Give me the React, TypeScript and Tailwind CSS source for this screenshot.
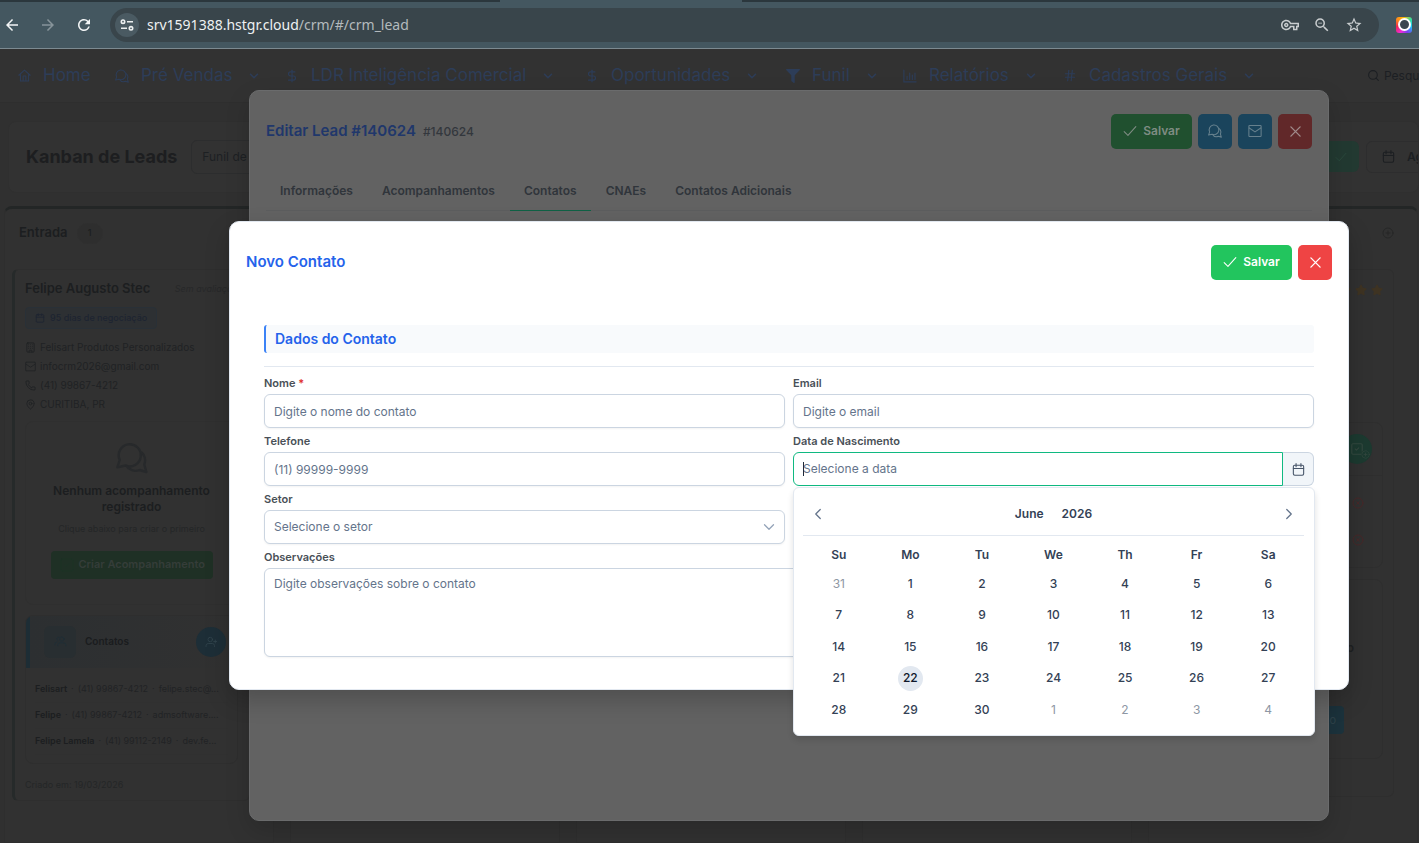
import type { ReactNode } from "react";
import clsx from "clsx";
import { FaFilter, FaStar } from "react-icons/fa";
import { MdArrowBack, MdArrowForward, MdOutlineVpnKey, MdOutlineZoomOut, MdRefresh, MdStarBorder } from "react-icons/md";
import {
  Building,
  Calendar,
  ChevronDown,
  ChevronLeft,
  ChevronRight,
  CircleX,
  DollarSign,
  Hash,
  MapPin,
  Phone,
  CirclePlus,
  Search,
  SquareCheck,
} from "lucide-react";

interface IconProps {
  className?: string;
}

function HomeIcon({ className }: IconProps) {
  return (
    <svg viewBox="0 0 24 24" fill="none" stroke="currentColor" strokeWidth="2" className={className} aria-hidden="true">
      <path d="M1.500 11.500 12 2l10.500 9.500M4.500 9.500V22h15V9.500M9.500 21.500V13h5v8.500" strokeLinejoin="round" strokeLinecap="round" />
    </svg>
  );
}

function CommentsIcon({ className }: IconProps) {
  return (
    <svg viewBox="0 0 24 24" fill="none" stroke="currentColor" strokeWidth="1.800" strokeLinejoin="round" className={className} aria-hidden="true">
      <path d="M1 19 2.800 13.500A8.300 8.300 0 1 1 7 17.600z" />
      <path d="M18.800 7.500a8 8 0 0 1 2.400 9.500l1.600 5.500-5.100-1.500A8.200 8.200 0 0 1 7.500 17.500" />
    </svg>
  );
}

function EnvelopeIcon({ className }: IconProps) {
  return (
    <svg viewBox="0 0 24 24" fill="none" stroke="currentColor" strokeWidth="1.800" strokeLinejoin="round" className={className} aria-hidden="true">
      <rect x="1.500" y="2.500" width="21" height="19" rx="1.500" />
      <path d="m1.500 6.500 10.500 7 10.500-7" />
    </svg>
  );
}

function ChartIcon({ className }: IconProps) {
  return (
    <svg viewBox="0 0 24 24" fill="none" stroke="currentColor" strokeWidth="2" strokeLinecap="round" className={className} aria-hidden="true">
      <path d="M1.500 2v20h21M7 12.500V18M11.500 7v11M16 10.500V18M20.500 7v11" />
    </svg>
  );
}

function CheckIcon({ className }: IconProps) {
  return (
    <svg viewBox="0 0 24 24" fill="none" stroke="currentColor" strokeWidth="1.800" strokeLinecap="round" strokeLinejoin="round" className={className} aria-hidden="true">
      <path d="m2 13 6.500 6.500L22 4.500" />
    </svg>
  );
}

function TimesIcon({ className }: IconProps) {
  return (
    <svg viewBox="0 0 24 24" fill="none" stroke="currentColor" strokeWidth="2.500" strokeLinecap="round" className={className} aria-hidden="true">
      <path d="m3.500 3.500 17 17M20.500 3.500l-17 17" />
    </svg>
  );
}

function CalendarIcon({ className }: IconProps) {
  return (
    <svg viewBox="0 0 24 24" fill="none" stroke="currentColor" strokeWidth="2" strokeLinecap="round" className={className} aria-hidden="true">
      <rect x="2.500" y="4" width="19" height="18.500" rx="2.500" />
      <path d="M2.500 10h19M7.500 1v6M16.500 1v6" />
    </svg>
  );
}

function UsersIcon({ className }: IconProps) {
  return (
    <svg viewBox="0 0 24 24" fill="none" stroke="currentColor" strokeWidth="1.500" strokeLinecap="round" className={className} aria-hidden="true">
      <circle cx="14.500" cy="7.500" r="4" />
      <path d="M7 20v-1.500a4 4 0 0 1 4-4h7a4 4 0 0 1 4 4V20M9 3.800a3.500 3.500 0 0 0-2 6.500M1.500 18v-1a4 4 0 0 1 3.500-4" />
    </svg>
  );
}

function UserPlusIcon({ className }: IconProps) {
  return (
    <svg viewBox="0 0 24 24" fill="none" stroke="currentColor" strokeWidth="1.700" strokeLinecap="round" className={className} aria-hidden="true">
      <circle cx="10.500" cy="7" r="4.500" />
      <path d="M2 21v-1.500a4.500 4.500 0 0 1 4.500-4.500h8a4.500 4.500 0 0 1 4.500 4.500V21M20.500 8v6M17.500 11h6" />
    </svg>
  );
}

function BrowserBar() {
  return (
    <header className="relative z-30">
      <div className="flex h-[2px] bg-[#2b373d]">
        <div className="ml-[500px] h-full w-[242px] bg-[#445760]" />
      </div>
      <div className="flex h-[47px] items-center border-b border-[#7c8a91] bg-[#445760] pb-px">
        <button type="button" aria-label="Voltar" className="ml-[3px] text-[#f3f5f6]">
          <MdArrowBack size={18} />
        </button>
        <button type="button" aria-label="Avançar" className="ml-[18px] text-[#87949a]">
          <MdArrowForward size={18} />
        </button>
        <button type="button" aria-label="Recarregar" className="ml-[18px] text-[#f3f5f6]">
          <MdRefresh size={18} />
        </button>
        <div className="ml-[17px] mr-[17px] flex h-[34px] flex-1 items-center rounded-full bg-[#39454b] pl-[5px] pr-4">
          <button type="button" aria-label="Informações do site" className="flex h-6 w-6 items-center justify-center rounded-full bg-[#4a5a62] text-[#eceff0]">
            <svg viewBox="0 0 14 12" fill="none" stroke="currentColor" strokeWidth="1.600" className="h-3 w-[14px]" aria-hidden="true">
              <circle cx="3" cy="2.700" r="1.700" />
              <path d="M7 2.700h6M1 9.300h6" />
              <circle cx="11" cy="9.300" r="1.700" />
            </svg>
          </button>
          <span className="ml-2 flex-1 font-['Noto_Sans',sans-serif] text-[14px] text-[#b4babd]">
            <span className="text-[#eef1f2]">srv1591388.hstgr.cloud</span>/crm/#/crm_lead
          </span>
          <div className="flex items-center gap-[14px] text-[#c9cdcf]">
            <MdOutlineVpnKey size={18} />
            <MdOutlineZoomOut size={18} />
            <MdStarBorder size={18} />
          </div>
        </div>
        <div className="mr-[7px] flex h-4 w-4 items-center justify-center rounded-[3px] bg-[conic-gradient(#fbbc05,#34e0a1,#18c5f5,#7a3cf0,#f02ad8,#f0264f,#ff8a1e,#fbbc05)]">
          <span className="h-[13px] w-[13px] rounded-full border-2 border-white bg-[#3a4650]" />
        </div>
      </div>
    </header>
  );
}

const navItems = [
  { label: "Home", icon: <HomeIcon className="h-[13px] w-[13px]" />, width: "w-[98px]", menu: false },
  { label: "Pré Vendas", icon: <CommentsIcon className="h-[14px] w-[14px]" />, width: "w-[170px]", menu: true },
  { label: "LDR Inteligência Comercial", icon: <DollarSign size={14} />, width: "w-[300px]", menu: true },
  { label: "Oportunidades", icon: <DollarSign size={14} />, width: "w-[201px]", menu: true },
  { label: "Funil", icon: <FaFilter size={14} />, width: "w-[117px]", menu: true },
  { label: "Relatórios", icon: <ChartIcon className="h-[14px] w-[14px]" />, width: "w-[160px]", menu: true },
  { label: "Cadastros Gerais", icon: <Hash size={15} />, width: "w-[304px]", menu: true },
];

function MainNav() {
  return (
    <nav className="flex h-[54px] items-center overflow-hidden border-b border-[#2e2e2e] bg-[#323232] pl-[17px] text-[#2d3d58]">
      {navItems.map((item) => (
        <a key={item.label} href="#/crm_lead" className={clsx("flex shrink-0 items-center whitespace-nowrap text-[17px]", item.width)}>
          <span className="flex w-[14px] shrink-0 justify-center">{item.icon}</span>
          <span className="ml-3">{item.label}</span>
          {item.menu && <ChevronDown size={14} strokeWidth={2.5} className="ml-[15px]" />}
        </a>
      ))}
      <button type="button" className="flex shrink-0 items-center gap-1 text-[12px] text-[#1c1f23]">
        <Search size={13} strokeWidth={2} />
        Pesquisar
      </button>
    </nav>
  );
}

function KanbanToolbar() {
  return (
    <div className="ml-2 mt-[18px] flex h-[72px] items-center overflow-hidden rounded-lg border border-[#2f2f2f] bg-[#323232] pb-px pl-[17px]">
      <h1 className="shrink-0 text-[18px] font-bold text-[#1d1e20]">Kanban de Leads</h1>
      <button type="button" className="ml-[14px] h-[34px] w-[180px] shrink-0 rounded-md border border-[#2c2d2e] px-[10px] text-left text-[12px] text-[#1d2023]">
        Funil de Vendas
      </button>
      <div className="min-w-0 flex-1" />
      <button type="button" aria-label="Aplicar" className="flex h-[31px] w-[50px] shrink-0 items-center justify-end rounded-md bg-[#223931] pr-3 text-[#2b4a3d]">
        <CheckIcon className="h-3 w-3" />
      </button>
      <button type="button" className="-mr-8 ml-[7px] flex h-8 w-[84px] shrink-0 items-center gap-3 rounded-md border border-[#2d2d2e] pl-[15px] text-[12px] font-semibold text-[#1c1f22]">
        <CalendarIcon className="h-[13px] w-[13px] shrink-0" />
        Agenda
      </button>
    </div>
  );
}

function Column({ children }: { children?: ReactNode }) {
  return (
    <section className="w-[270px] shrink-0 rounded-t-lg border border-t-[3px] border-[#2e2e2e] border-t-[#232626] bg-[#313131] pl-[7px] pr-[23px]">
      {children}
    </section>
  );
}

const infoRows = [
  { icon: <Building size={11} />, text: "Felisart Produtos Personalizados" },
  { icon: <EnvelopeIcon className="h-[11px] w-[11px]" />, text: "infocrm2026@gmail.com" },
  { icon: <Phone size={11} />, text: "(41) 99867-4212" },
  { icon: <MapPin size={11} />, text: "CURITIBA, PR" },
];

const cardContacts = [
  { name: "Felisart", phone: "(41) 99867-4212", email: "felipe.stec@..." },
  { name: "Felipe", phone: "(41) 99867-4212", email: "admsoftware...." },
  { name: "Felipe Lamela", phone: "(41) 99112-2149", email: "dev.fe..." },
];

function LeadCard() {
  return (
    <article className="h-[532px] rounded-md border border-l-[3px] border-[#2e2e2e] border-l-[#262a2a] pl-[10px] pr-[11px] pt-[9px]">
      <div className="flex items-center justify-between whitespace-nowrap">
        <h3 className="text-[13px] font-semibold text-[#1c1e20]">Felipe Augusto Stec</h3>
        <span className="text-[9px] italic text-[#272829]">Sem avaliação</span>
      </div>
      <p className="mt-2 inline-flex h-[22px] items-center gap-[5px] whitespace-nowrap rounded border border-[#293037] bg-[#2d3033] px-[9px] text-[9px] font-medium text-[#1d2431]">
        <Calendar size={10} />
        95 dias de negociação
      </p>
      <ul className="mt-[9px] text-[10px] text-[#202224]">
        {infoRows.map((row) => (
          <li key={row.text} className="flex h-[19px] items-center gap-1 whitespace-nowrap">
            {row.icon}
            {row.text}
          </li>
        ))}
      </ul>
      <div className="mt-[7px] flex h-[184px] flex-col items-center rounded-lg border border-[#2f2f2f] pt-[20px] text-center">
        <CommentsIcon className="h-8 w-8 text-[#27292b]" />
        <p className="mt-[9px] text-[12px] font-semibold leading-4 text-[#1c1e20]">
          Nenhum acompanhamento
          <br />
          registrado
        </p>
        <p className="mt-[6px] whitespace-nowrap text-[9px] leading-4 text-[#242627]">Clique abaixo para criar o primeiro</p>
        <button type="button" className="mt-[14px] flex h-7 w-[162px] shrink-0 items-center gap-1 whitespace-nowrap rounded bg-[#1f3025] pl-2 text-[11px] font-semibold text-[#353d39]">
          <SquareCheck size={16} strokeWidth={1.5} className="shrink-0 text-[#1c3325]" />
          Criar Acompanhamento
        </button>
      </div>
      <div className="mt-[10px] h-[149px] overflow-hidden rounded-lg border border-[#2e2e2e]">
        <div className="flex h-[52px] items-center border-l-4 border-[#1d2d35] bg-gradient-to-r from-[#2c2f31] to-[#313131] pl-[14px] pr-[11px]">
          <span className="flex h-8 w-8 items-center justify-center rounded-md bg-[#282e31] text-[#1f2f38]">
            <UsersIcon className="h-[13px] w-[13px]" />
          </span>
          <h4 className="ml-[9px] flex-1 text-[10px] font-semibold text-[#1a1c1e]">Contatos</h4>
          <button type="button" aria-label="Adicionar contato" className="flex h-[30px] w-[30px] items-center justify-center rounded-full bg-[#1d2e37] text-[#32444d]">
            <UserPlusIcon className="h-3 w-3" />
          </button>
        </div>
        <ul className="px-[9px] pt-[9px]">
          {cardContacts.map((contact) => (
            <li key={contact.name} className="flex h-[26px] items-center gap-1 whitespace-nowrap border-b border-[#303030] text-[9px] text-[#212325]">
              <strong className="font-semibold text-[#1c1e20]">{contact.name}</strong>
              <span>·</span>
              <span>{contact.phone}</span>
              <span>·</span>
              <span>{contact.email}</span>
            </li>
          ))}
        </ul>
      </div>
      <p className="mt-[14px] text-[9px] text-[#242627]">Criado em: 19/03/2026</p>
    </article>
  );
}

// Last column, mostly covered by the dialogs
function RatedCard() {
  return (
    <article className="flex h-[528px] flex-col rounded-md border border-l-[3px] border-[#2e2e2e] pl-[10px] pr-[10px] pt-[14px]">
      <div className="flex justify-end gap-1 text-[#3e3322]">
        <FaStar size={12} />
        <FaStar size={12} />
        <FaStar size={12} />
      </div>
      <div className="mt-[126px] h-[146px] rounded-lg border border-[#2e2e2e]">
        <div className="flex h-[53px] items-center justify-end border-b border-[#2e2e2e] pr-[10px]">
          <span className="relative flex h-[30px] w-[30px] items-center justify-center rounded-full bg-[#1c3a30] text-[#33483f]">
            <SquareCheck size={14} />
            <CirclePlus size={9} className="absolute bottom-[5px] right-[2px] rounded-full bg-[#1c3a30]" />
          </span>
        </div>
        <div className="flex flex-col items-end gap-[25px] pr-[18px] pt-[21px] text-[#482829]">
          <CircleX size={12} />
          <CircleX size={12} />
        </div>
      </div>
      <div className="mt-[11px] h-[180px] rounded-lg border border-[#2e2e2e]">
        <p className="mt-[60px] pr-7 text-right text-[12px] font-semibold leading-4 text-[#1f2123]">o</p>
        <div className="mt-[50px] flex justify-end pr-[38px]">
          <span className="flex h-7 w-[120px] items-center justify-end rounded bg-[#1c333d] pr-2 text-[11px] text-[#30434b]">o</span>
        </div>
      </div>
    </article>
  );
}

function Board() {
  return (
    <div className="mt-[13px] flex flex-1 gap-4 overflow-hidden pl-1">
      <Column>
        <div className="flex h-[60px] items-center gap-[9px] pb-3 pl-[7px]">
          <h2 className="text-[13px] font-semibold text-[#1c1e20]">Entrada</h2>
          <span className="flex h-[21px] w-[26px] items-center justify-center rounded-full border border-[#2f2f2f] bg-[#2e2e2e] text-[9px] font-medium text-[#1c1e20]">1</span>
        </div>
        <LeadCard />
      </Column>
      <Column />
      <Column />
      <Column />
      <Column>
        <div className="flex h-[60px] items-center justify-end pb-3 text-[#262727]">
          <CirclePlus size={12} />
        </div>
        <RatedCard />
      </Column>
    </div>
  );
}

const leadTabs = ["Informações", "Acompanhamentos", "Contatos", "CNAEs", "Contatos Adicionais"];

function LeadDialog() {
  return (
    <div role="dialog" aria-label="Editar Lead" className="absolute bottom-[22px] left-[249px] right-[90px] top-[90px] rounded-[10px] border border-[#6a6b6c] bg-[#626262] px-4 shadow-[0_10px_24px_rgba(0,0,0,0.15)]">
      <div className="flex h-[81px] items-center gap-[6px]">
        <h2 className="text-[15px] font-semibold text-[#20376b]">Editar Lead #140624</h2>
        <span className="flex-1 pl-px text-[12px] font-medium text-[#33373d]">#140624</span>
        <button type="button" className="flex h-[35px] w-[81px] items-center justify-center gap-[6px] rounded-[5px] bg-[#20502f] pb-px text-[12px] font-semibold text-[#7f8c83]">
          <CheckIcon className="h-[14px] w-[14px]" />
          Salvar
        </button>
        <button type="button" aria-label="Comentários" className="flex h-[35px] w-[34px] items-center justify-center rounded-[5px] bg-[#1a445c] pb-px text-[#66808d]">
          <CommentsIcon className="h-[14px] w-[14px]" />
        </button>
        <button type="button" aria-label="Enviar email" className="flex h-[35px] w-[34px] items-center justify-center rounded-[5px] bg-[#1a445c] pb-px text-[#66808d]">
          <EnvelopeIcon className="h-[14px] w-[14px]" />
        </button>
        <button type="button" aria-label="Fechar lead" className="flex h-[35px] w-[34px] items-center justify-center rounded-[5px] bg-[#612829] pb-px text-[#a08b8b]">
          <TimesIcon className="h-[13px] w-[13px]" />
        </button>
      </div>
      <div role="tablist" className="flex h-[39px] gap-px border-b border-[#5c5d5e]">
        {leadTabs.map((tab) => (
          <button
            key={tab}
            type="button"
            role="tab"
            aria-selected={tab === "Contatos"}
            className={clsx(
              "-mb-px border-b px-[14px] text-[12px] font-semibold text-[#30353b]",
              tab === "Contatos" ? "border-[#0f6145]" : "border-transparent",
            )}
          >
            {tab}
          </button>
        ))}
      </div>
    </div>
  );
}

const weekDays = ["Su", "Mo", "Tu", "We", "Th", "Fr", "Sa"];

const weeks = [
  [31, 1, 2, 3, 4, 5, 6],
  [7, 8, 9, 10, 11, 12, 13],
  [14, 15, 16, 17, 18, 19, 20],
  [21, 22, 23, 24, 25, 26, 27],
  [28, 29, 30, 1, 2, 3, 4],
];

function DatePanel() {
  return (
    <div className="absolute left-0 right-[-1px] top-full z-10 mt-px rounded-md border border-[#e2e8f0] bg-white pb-[10px] pl-[9px] pr-[10px] text-[#334155] shadow-[0_4px_6px_rgba(0,0,0,0.12)]">
      <div className="flex h-[48px] items-center justify-between border-b border-[#e2e8f0] px-[6px] pt-1">
        <button type="button" aria-label="Mês anterior" className="text-[#64748b]">
          <ChevronLeft size={18} strokeWidth={1.7} />
        </button>
        <div className="flex gap-[18px] text-[12px] font-semibold">
          <button type="button">June</button>
          <button type="button">2026</button>
        </div>
        <button type="button" aria-label="Próximo mês" className="text-[#64748b]">
          <ChevronRight size={18} strokeWidth={1.7} />
        </button>
      </div>
      <table className="mt-[6px] w-full table-fixed text-center">
        <thead>
          <tr className="h-[25px]">
            {weekDays.map((day) => (
              <th key={day} scope="col" className="p-0 text-[12px] font-semibold">
                {day}
              </th>
            ))}
          </tr>
        </thead>
        <tbody>
          {weeks.map((week, row) => (
            <tr key={week[0]} className={row % 2 === 0 ? "h-8" : "h-[31px]"}>
              {week.map((day) => {
                const otherMonth = (row === 0 && day > 20) || (row === 4 && day < 10);
                const today = day === 22;
                return (
                  <td key={day} className="p-0">
                    <button
                      type="button"
                      className={clsx(
                        "h-[25px] w-[25px] rounded-full text-[12px]",
                        otherMonth ? "text-[#8e97a4]" : "font-medium",
                        today && "bg-[#e2e8f0] text-[#0f172a]",
                      )}
                    >
                      {day}
                    </button>
                  </td>
                );
              })}
            </tr>
          ))}
        </tbody>
      </table>
    </div>
  );
}

interface FieldProps {
  id: string;
  label: string;
  required?: boolean;
  className?: string;
  children: ReactNode;
}

function Field({ id, label, required, className, children }: FieldProps) {
  return (
    <div className={className}>
      <label htmlFor={id} className="block h-[23px] pt-1 text-[11px] font-semibold leading-4 text-[#495057]">
        {label}
        {required && <span className="text-[#e03131]"> *</span>}
      </label>
      {children}
    </div>
  );
}

const inputClass =
  "block w-full rounded-md border border-[#cbd5e1] bg-white px-[9px] text-[12px] text-[#334155] placeholder:text-[#64748b] outline-none shadow-[0_1px_2px_rgba(18,18,23,0.05)]";

function ContactDialog() {
  return (
    <form aria-label="Novo Contato" className="absolute left-[229px] right-[70px] top-[221px] z-20 rounded-[10px] border border-[#e2e8f0] bg-white px-4 pb-8 shadow-[0_10px_24px_rgba(0,0,0,0.2)]">
      <div className="flex h-[81px] items-center gap-[6px]">
        <h2 className="flex-1 text-[15px] font-semibold text-[#2563eb]">Novo Contato</h2>
        <button type="submit" className="flex h-[35px] w-[81px] items-center justify-center gap-[6px] rounded-[5px] bg-[#22c55e] pb-px text-[12px] font-semibold text-white">
          <CheckIcon className="h-[14px] w-[14px]" />
          Salvar
        </button>
        <button type="button" aria-label="Fechar" className="flex h-[35px] w-[34px] items-center justify-center rounded-[5px] bg-[#ef4444] pb-px text-white">
          <TimesIcon className="h-[13px] w-[13px]" />
        </button>
      </div>
      <div className="px-[18px] pt-[22px]">
        <h3 className="h-7 rounded-[3px] border-l-2 border-[#3b82f6] bg-[#f8fafc] pl-[9px] text-[14px] font-semibold leading-[27px] text-[#2563eb]">
          Dados do Contato
        </h3>
        <hr className="mt-[13px] border-[#e2e8f0]" />
        <div className="mt-1 grid grid-cols-2 gap-x-2 gap-y-px">
          <Field id="nome" label="Nome" required>
            <input id="nome" type="text" placeholder="Digite o nome do contato" className={clsx(inputClass, "h-[34px]")} />
          </Field>
          <Field id="email" label="Email">
            <input id="email" type="email" placeholder="Digite o email" className={clsx(inputClass, "h-[34px]")} />
          </Field>
          <Field id="telefone" label="Telefone">
            <input id="telefone" type="tel" placeholder="(11) 99999-9999" className={clsx(inputClass, "h-[34px]")} />
          </Field>
          <Field id="nascimento" label="Data de Nascimento">
            <div className="relative flex h-[34px]">
              <input id="nascimento" type="text" placeholder="Selecione a data" className="min-w-0 flex-1 rounded-l-md border border-[#10b981] bg-white px-[9px] text-[12px] outline-none placeholder:text-[#64748b]" />
              <span className="absolute left-[10px] top-[10px] h-[14px] w-px bg-[#1e293b]" />
              <button type="button" aria-label="Abrir calendário" className="flex w-[31px] items-center justify-center rounded-r-md border border-l-0 border-[#cbd5e1] bg-[#f1f5f9] text-[#475569]">
                <CalendarIcon className="h-[13px] w-[13px]" />
              </button>
              <DatePanel />
            </div>
          </Field>
          <Field id="setor" label="Setor">
            <div className="relative">
              <select id="setor" className={clsx(inputClass, "h-[34px] appearance-none !text-[#64748b]")}>
                <option>Selecione o setor</option>
              </select>
              <ChevronDown size={18} strokeWidth={1.7} className="pointer-events-none absolute right-[7px] top-2 text-[#94a3b8]" />
            </div>
          </Field>
          <Field id="observacoes" label="Observações" className="col-span-2">
            <textarea id="observacoes" placeholder="Digite observações sobre o contato" className={clsx(inputClass, "h-[89px] resize-none py-[7px] leading-4")} />
          </Field>
        </div>
      </div>
    </form>
  );
}

export default function App() {
  return (
    <div className="relative flex h-screen flex-col overflow-hidden bg-[#303030] font-['Inter',sans-serif]">
      <BrowserBar />
      <MainNav />
      <KanbanToolbar />
      <Board />
      <LeadDialog />
      <ContactDialog />
    </div>
  );
}
